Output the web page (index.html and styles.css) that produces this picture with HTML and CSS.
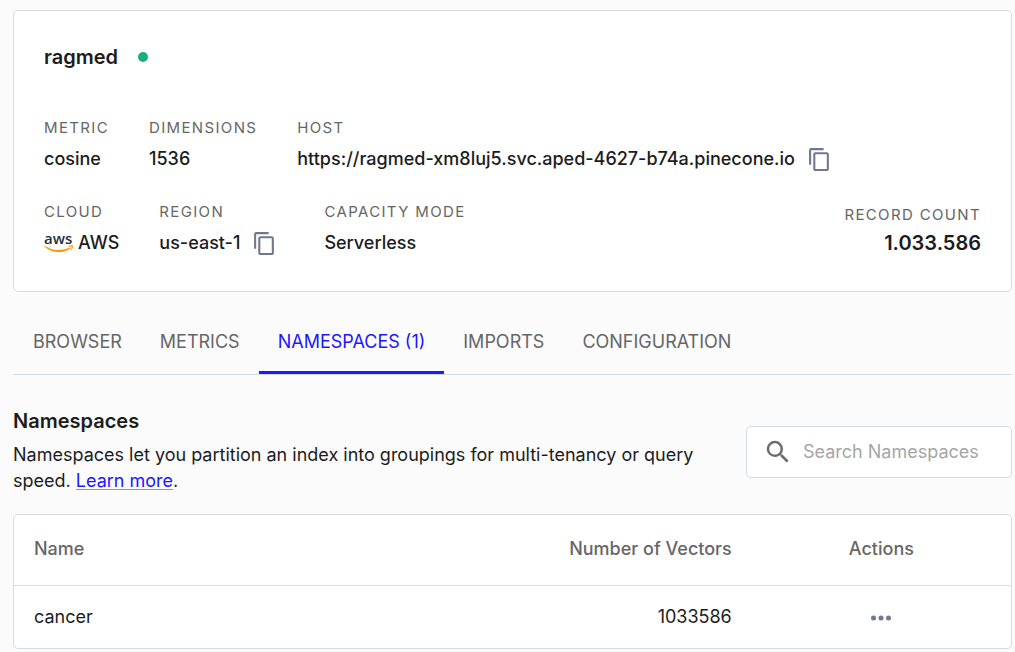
FILE: index.html
```html
<!DOCTYPE html>
<html lang="en">
<head>
<meta charset="utf-8">
<meta name="viewport" content="width=device-width, initial-scale=1">
<title>ragmed</title>
<link rel="stylesheet" href="styles.css">
</head>
<body>
<main class="page">
  <section class="card">
    <header class="card-head">
      <h1 class="title">ragmed</h1>
      <span class="status" role="img" aria-label="Ready"></span>
    </header>
    <dl class="facts">
      <div class="fact"><dt class="label">METRIC</dt><dd class="value">cosine</dd></div>
      <div class="fact"><dt class="label">DIMENSIONS</dt><dd class="value">1536</dd></div>
      <div class="fact">
        <dt class="label">HOST</dt>
        <dd class="value">https://ragmed-xm8luj5.svc.aped-4627-b74a.pinecone.io
          <button class="icon-button" type="button" aria-label="Copy host"><svg class="copy-icon" viewBox="0 0 24 24"><path d="M16 1H4c-1.1 0-2 .9-2 2v14h2V3h12V1zm3 4H8c-1.1 0-2 .9-2 2v14c0 1.1.9 2 2 2h11c1.1 0 2-.9 2-2V7c0-1.1-.9-2-2-2zm0 16H8V7h11v14z"/></svg></button>
        </dd>
      </div>
    </dl>
    <div class="card-foot">
      <dl class="facts">
        <div class="fact">
          <dt class="label">CLOUD</dt>
          <dd class="value">
            <svg class="aws-logo" viewBox="0 0 30 20" aria-hidden="true"><text class="aws-word" x="0" y="11">aws</text><path class="aws-smile" d="M.2 12.600C6 16 10 17 14.500 17c4 0 8-.9 11.500-2.400.7-.3 1.200.3.600.8C23.300 17.800 19 19 14.500 19 9 19 4 17 .1 13.200c-.4-.4-.2-.8.1-.6z"/><path class="aws-smile" d="M24 13c1.600-1 4.500-1 4.900-.5.4.6-.2 3.700-1.700 4.900-.3.200-.5.100-.4-.2.500-1.100 1.200-2.900.9-3.400-.3-.4-2.200-.3-3.400-.2-.4 0-.5-.3-.3-.6z"/></svg>AWS
          </dd>
        </div>
        <div class="fact">
          <dt class="label">REGION</dt>
          <dd class="value">us-east-1
            <button class="icon-button" type="button" aria-label="Copy region"><svg class="copy-icon" viewBox="0 0 24 24"><path d="M16 1H4c-1.1 0-2 .9-2 2v14h2V3h12V1zm3 4H8c-1.1 0-2 .9-2 2v14c0 1.1.9 2 2 2h11c1.1 0 2-.9 2-2V7c0-1.1-.9-2-2-2zm0 16H8V7h11v14z"/></svg></button>
          </dd>
        </div>
        <div class="fact"><dt class="label">CAPACITY MODE</dt><dd class="value">Serverless</dd></div>
      </dl>
      <dl class="record">
        <dt class="label">RECORD COUNT</dt>
        <dd class="record-value">1.033.586</dd>
      </dl>
    </div>
  </section>

  <nav class="tabs">
    <a class="tab" href="#browser">BROWSER</a>
    <a class="tab" href="#metrics">METRICS</a>
    <a class="tab tab-active" href="#namespaces" aria-current="page">NAMESPACES (1)</a>
    <a class="tab" href="#imports">IMPORTS</a>
    <a class="tab" href="#configuration">CONFIGURATION</a>
  </nav>

  <section class="intro" id="namespaces">
    <div class="intro-text">
      <h2 class="title">Namespaces</h2>
      <p class="description">Namespaces let you partition an index into groupings for multi-tenancy or query speed. <a class="link" href="#learn">Learn more</a>.</p>
    </div>
    <label class="search">
      <svg class="search-icon" viewBox="0 0 24 24" aria-hidden="true"><path d="M15.500 14h-.79l-.28-.27A6.471 6.471 0 0 0 16 9.500 6.500 6.500 0 1 0 9.500 16c1.610 0 3.090-.59 4.230-1.570l.27.28v.79l5 4.990L20.490 19l-4.990-5zm-6 0C7.010 14 5 11.990 5 9.500S7.010 5 9.500 5 14 7.010 14 9.500 11.990 14 9.500 14z"/></svg>
      <input class="search-input" type="text" placeholder="Search Namespaces" aria-label="Search Namespaces">
    </label>
  </section>

  <div class="table-frame">
    <table class="table">
      <thead>
        <tr><th class="name" scope="col">Name</th><th class="count" scope="col">Number of Vectors</th><th class="actions" scope="col">Actions</th></tr>
      </thead>
      <tbody>
        <tr>
          <td class="name">cancer</td><td class="count">1033586</td>
          <td class="actions"><button class="icon-button more" type="button" aria-label="Actions for cancer"><svg class="more-icon" viewBox="0 0 20 6"><circle cx="2.500" cy="3" r="2.500"/><circle cx="10" cy="3" r="2.500"/><circle cx="17.500" cy="3" r="2.500"/></svg></button></td>
        </tr>
      </tbody>
    </table>
  </div>
</main>
</body>
</html>
```
FILE: styles.css
```css
* { box-sizing: border-box; }
body {
  margin: 0;
  background: #fbfbfb;
  color: #1c1c1c;
  font-family: Inter, "Liberation Sans", sans-serif;
  font-size: 18px;
  line-height: 26px;
}
h1, h2, p, dl, dd { margin: 0; }
.page { padding: 10px 3px 3px 13px; }
.card {
  padding: 34px 30px 35px;
  background: #fff;
  border: 1px solid #d9dcde;
  border-radius: 5px;
}
.card-head { display: flex; align-items: center; gap: 20px; margin-bottom: 49px; }
.title { font-size: 20px; line-height: 24px; font-weight: 600; }
.status { width: 10px; height: 10px; border-radius: 50%; background: #17b07b; }
.facts { display: flex; gap: 40px; }
.fact { display: flex; flex-direction: column; gap: 8px; }
.label {
  color: #666;
  font-size: 15px;
  line-height: 20px;
  letter-spacing: 0.09em;
}
.value { display: flex; align-items: center; font-weight: 500; white-space: nowrap; }
.icon-button {
  display: flex;
  margin: 0 7px 0 12px;
  padding: 0;
  border: 0;
  background: none;
  color: #717790;
  cursor: pointer;
}
.icon-button svg { fill: currentColor; }
.copy-icon { width: 25px; height: 25px; }
.aws-logo { width: 30px; height: 20px; margin-right: 4px; overflow: visible; }
.aws-word { font: 600 15px "Open Sans", sans-serif; fill: #252f3e; }
.aws-smile { fill: #f90; }
.card-foot { display: flex; justify-content: space-between; align-items: flex-end; margin-top: 30px; }
.record { display: flex; flex-direction: column; gap: 5px; text-align: right; }
.record-value { font-size: 20px; line-height: 26px; font-weight: 600; }

.tabs { display: flex; margin-top: 18px; padding: 0 1px; border-bottom: 1px solid #d5dbdf; }
.tab {
  padding: 19px 19px 16px;
  border-bottom: 3px solid transparent;
  color: #666;
  text-decoration: none;
}
.tab-active { color: #1c17ff; border-bottom-color: #1c17ff; }

.intro { display: flex; justify-content: space-between; align-items: center; gap: 40px; padding: 34px 0 20px; }
.intro-text { flex: 0 1 700px; }
.description { margin-top: 9px; }
.link { color: #1c17ff; text-decoration-color: #8d8aff; text-decoration-thickness: 1px; text-underline-offset: 2px; }
.search {
  display: flex;
  flex: 0 0 266px;
  align-items: center;
  gap: 10px;
  min-width: 0;
  height: 52px;
  padding: 0 16px;
  background: #fff;
  border: 1px solid #d5dbdf;
  border-radius: 5px;
}
.search-icon { flex: none; width: 30px; height: 30px; fill: #6b6b6b; }
.search-input {
  flex: 1;
  min-width: 0;
  padding: 0;
  border: 0;
  outline: 0;
  background: none;
  color: inherit;
  font: inherit;
}
.search-input::placeholder { color: #a6a6a6; opacity: 1; }

.table-frame { overflow: hidden; background: #fff; border: 1px solid #d5dbdf; border-radius: 5px; }
.table { width: 100%; border-collapse: collapse; table-layout: fixed; }
th, td { padding: 18px 20px; text-align: left; font-weight: 400; }
th { padding: 21px 20px 23px; border-bottom: 1px solid #d5dbdf; color: #666; font-weight: 500; }
.table .count { text-align: right; }
.table .actions { width: 26%; text-align: center; }
.more { display: inline-flex; margin: 0; vertical-align: middle; }
.more-icon { width: 20px; height: 6px; }
```
